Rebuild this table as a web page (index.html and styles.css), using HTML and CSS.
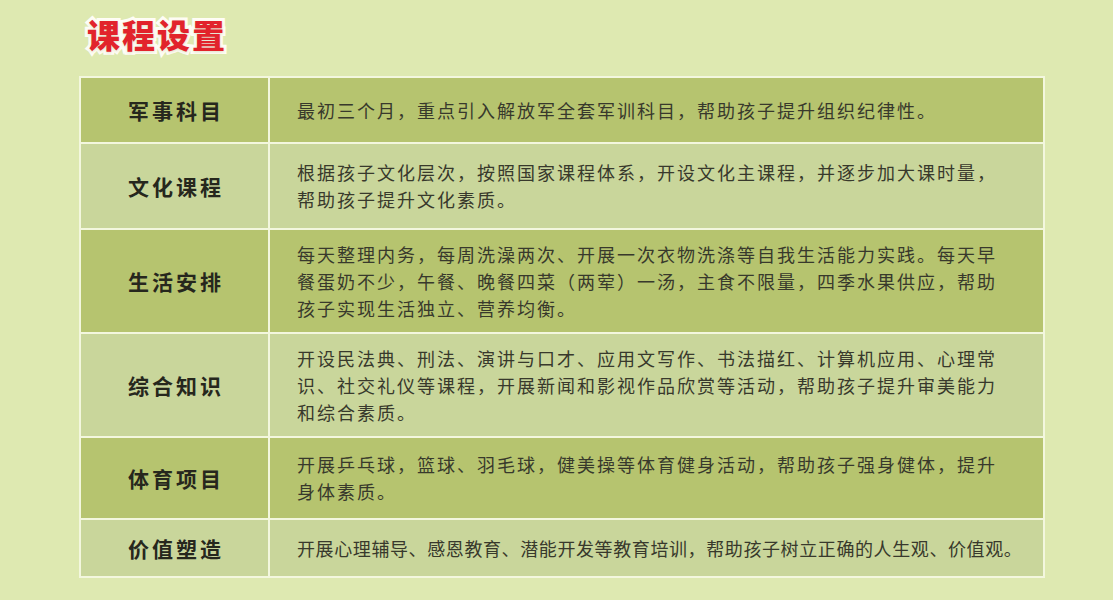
FILE: index.html
```html
<!DOCTYPE html>
<html lang="zh">
<head>
<meta charset="utf-8">
<title>课程设置</title>
<link rel="stylesheet" href="styles.css">
</head>
<body>
<div class="page">
  <h1 class="title">课程设置</h1>
  <table class="course">
    <tr class="dark r1">
      <th>军事科目</th>
      <td>最初三个月，重点引入解放军全套军训科目，帮助孩子提升组织纪律性。</td>
    </tr>
    <tr class="light r2">
      <th>文化课程</th>
      <td>根据孩子文化层次，按照国家课程体系，开设文化主课程，并逐步加大课时量，帮助孩子提升文化素质。</td>
    </tr>
    <tr class="dark r3">
      <th>生活安排</th>
      <td>每天整理内务，每周洗澡两次、开展一次衣物洗涤等自我生活能力实践。每天早餐蛋奶不少，午餐、晚餐四菜（两荤）一汤，主食不限量，四季水果供应，帮助孩子实现生活独立、营养均衡。</td>
    </tr>
    <tr class="light r4">
      <th>综合知识</th>
      <td>开设民法典、刑法、演讲与口才、应用文写作、书法描红、计算机应用、心理常识、社交礼仪等课程，开展新闻和影视作品欣赏等活动，帮助孩子提升审美能力和综合素质。</td>
    </tr>
    <tr class="dark r5">
      <th>体育项目</th>
      <td>开展乒乓球，篮球、羽毛球，健美操等体育健身活动，帮助孩子强身健体，提升身体素质。</td>
    </tr>
    <tr class="light r6">
      <th>价值塑造</th>
      <td><span class="tight">开展心理辅导、感恩教育、潜能开发等教育培训，帮助孩子树立正确的人生观、价值观。</span></td>
    </tr>
  </table>
</div>
</body>
</html>
```
FILE: styles.css
```css
html, body {
  margin: 0;
  padding: 0;
  background: #dee9b1;
}
body {
  font-family: "Noto Sans CJK SC", "Noto Sans", sans-serif;
  width: 1113px;
  height: 600px;
  overflow: hidden;
}
.page {
  padding: 14px 0 0 79px;
}
.title {
  margin: 0 0 22px 8px;
  font-size: 33px;
  line-height: 40px;
  font-weight: 900;
  color: #e2232b;
  letter-spacing: 2px;
  -webkit-text-stroke: 6px #fffdf6;
  paint-order: stroke fill;
  text-shadow: 0 1px 3px rgba(160, 170, 110, 0.35);
}
.course {
  border-collapse: collapse;
  width: 966px;
  table-layout: fixed;
}
.course th,
.course td {
  border: 2px solid #f3f7de;
  vertical-align: middle;
  padding: 0;
}
.course th {
  width: 184px;
  font-size: 21px;
  font-weight: 700;
  color: #26271d;
  letter-spacing: 3px;
  text-align: center;
  padding-left: 3px;
}
.course td {
  font-size: 18px;
  line-height: 27px;
  letter-spacing: 2px;
  color: #38392c;
  padding: 0 40px 0 27px;
}
.dark th, .dark td { background: #b6c46f; }
.light th, .light td { background: #c9d69b; }
.r1 { height: 66px; }
.r2 { height: 86px; }
.r3 { height: 104px; }
.r4 { height: 104px; }
.r5 { height: 82px; }
.r6 { height: 58px; }
.tight {
  letter-spacing: 0.6px;
  white-space: nowrap;
}
```
